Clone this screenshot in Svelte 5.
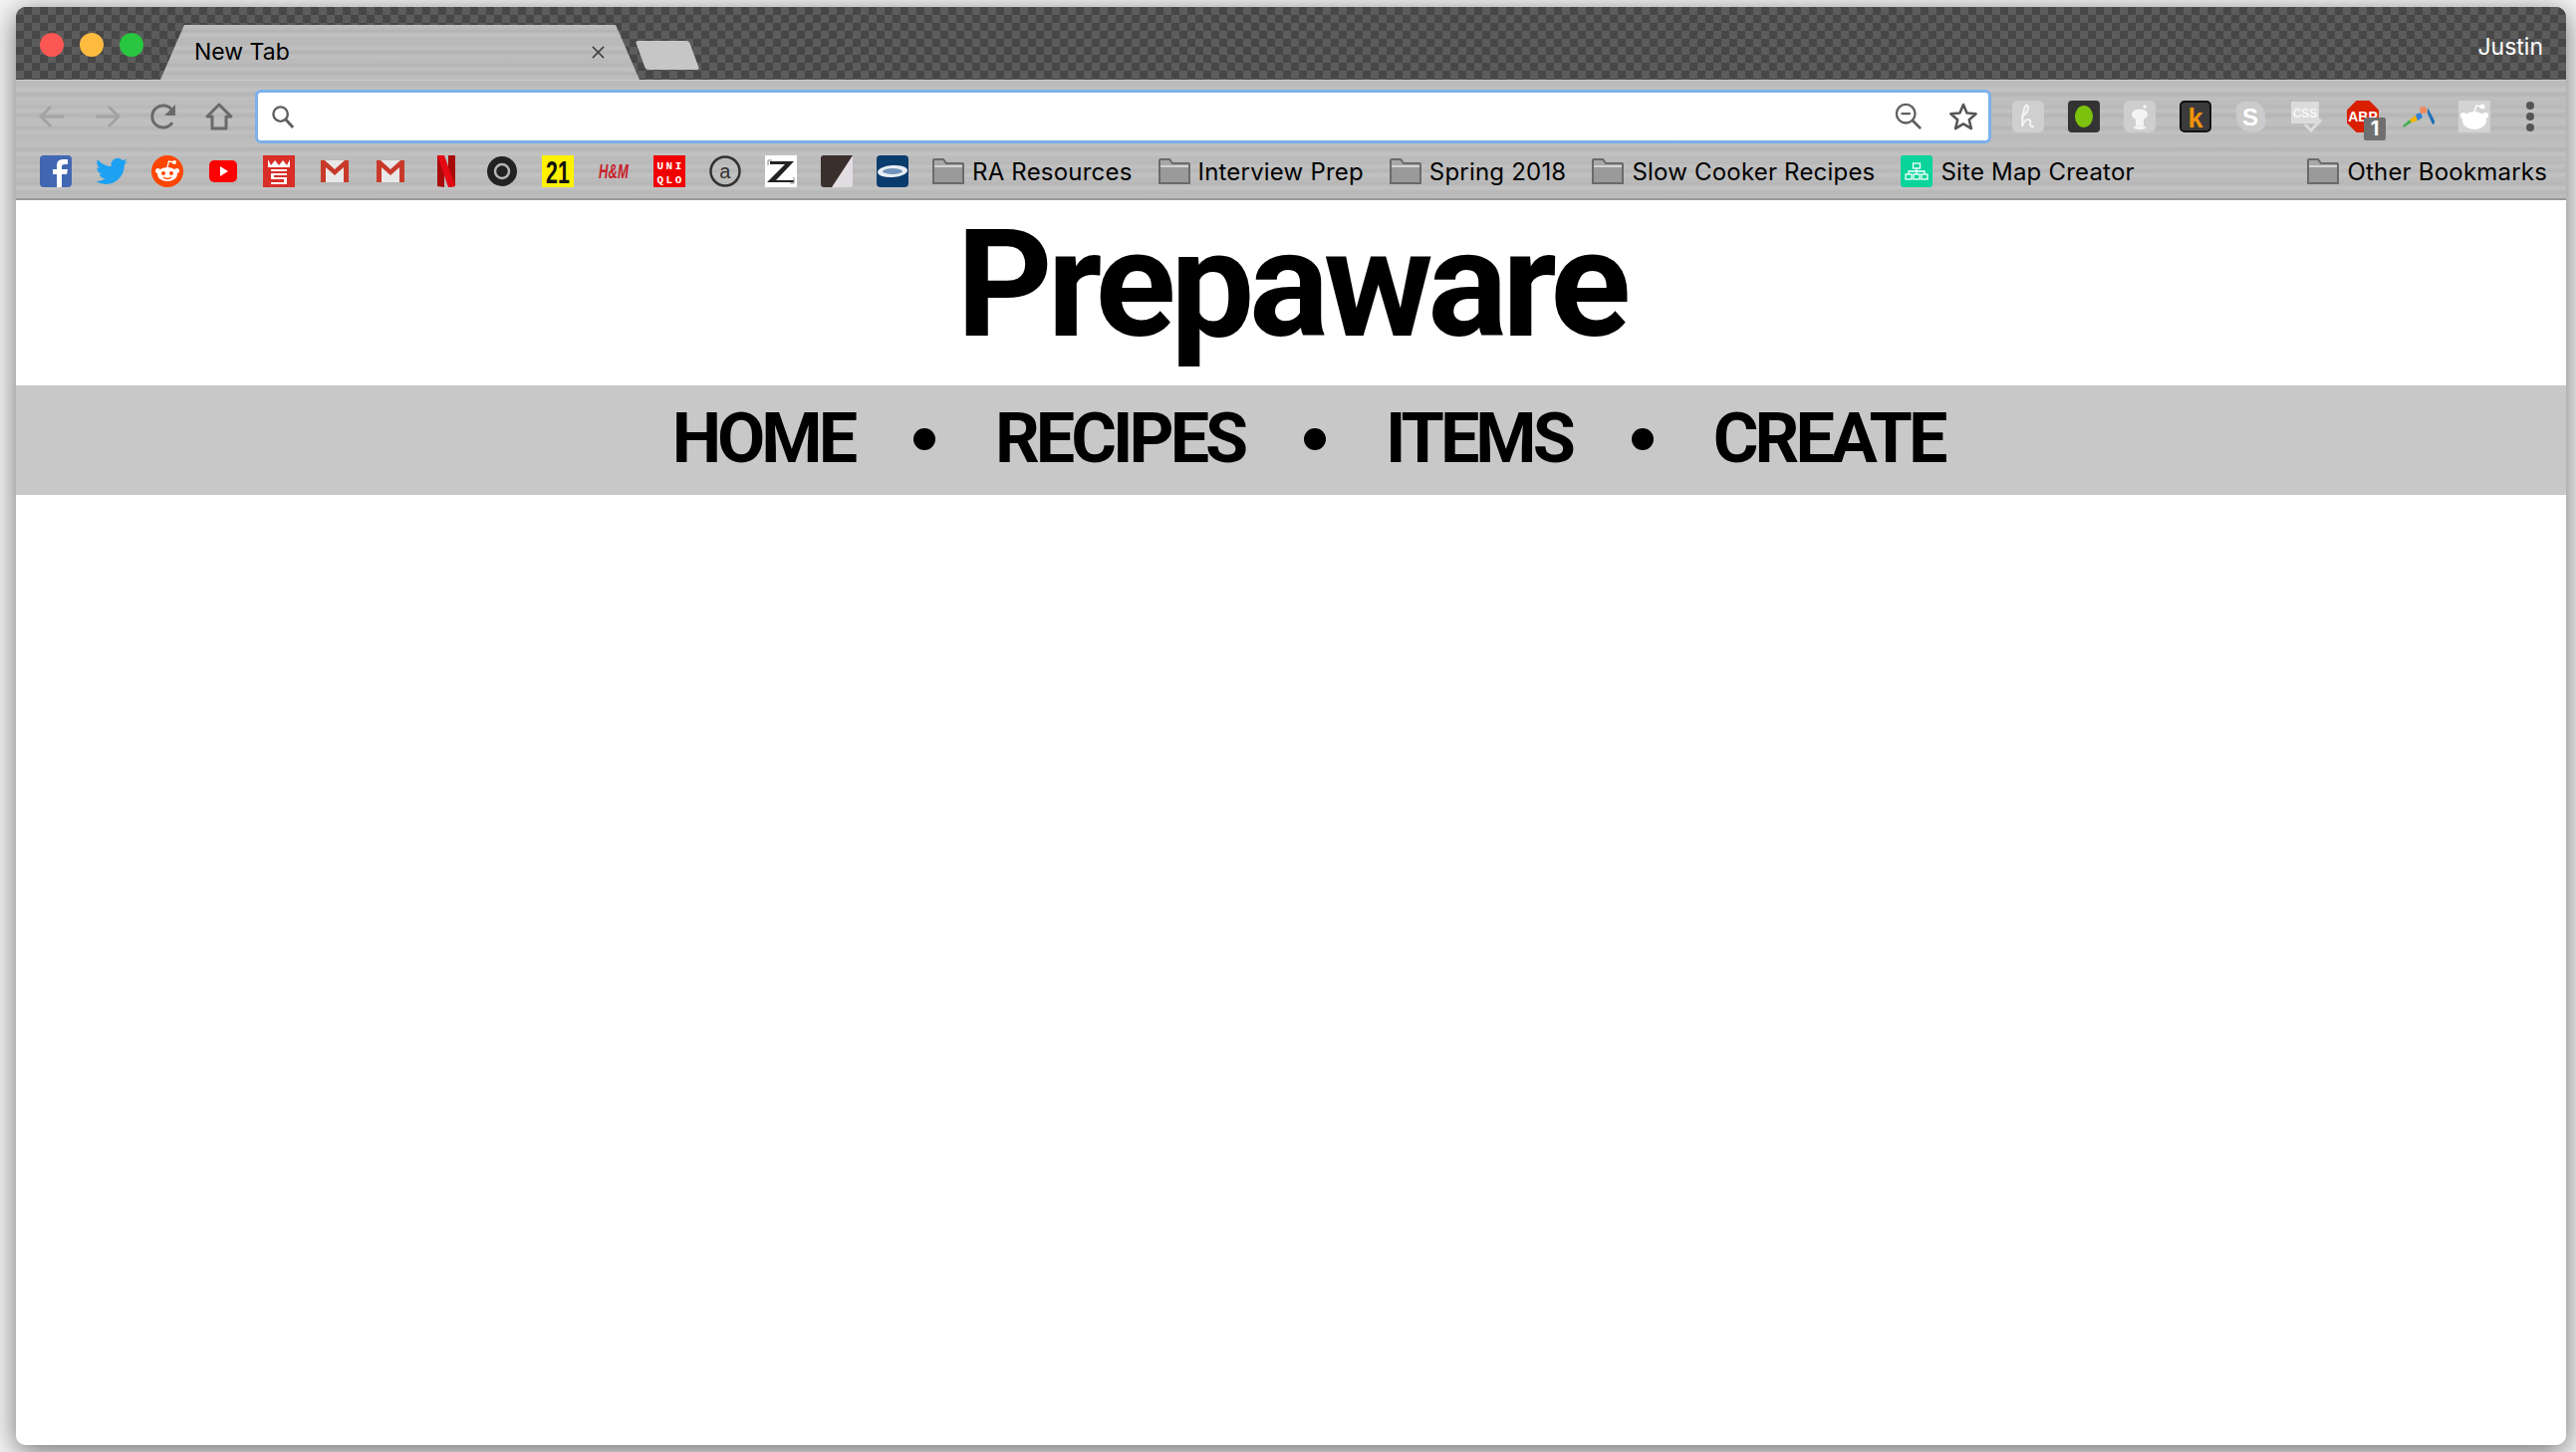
<script>
  const folders = ["RA Resources", "Interview Prep", "Spring 2018", "Slow Cooker Recipes"];
  const links = ["HOME", "RECIPES", "ITEMS", "CREATE"];
</script>

{#snippet folder()}
  <svg class="folder" viewBox="0 0 32 26">
    <path d="M1 25V2q0-1 1-1h9l3 4h16q1 0 1 1v19z" fill="#a8a8a8" stroke="#6a6a6a" stroke-width="2" />
    <path d="M2 7h28v2H2z" fill="#d4d4d4" />
    <path d="M2 9h28v15H2z" fill="#9a9a9a" />
  </svg>
{/snippet}

<div class="page">
  <div class="window">
    <header class="titlebar">
      <div class="lights">
        <span class="light red"></span>
        <span class="light yellow"></span>
        <span class="light green"></span>
      </div>
      <div class="tab">
        <span class="tab-title">New Tab</span>
        <svg class="tab-close" viewBox="0 0 16 16"><path d="M2 2l12 12M14 2L2 14" stroke="#444" stroke-width="1.8" /></svg>
      </div>
      <div class="new-tab"></div>
      <span class="user">Justin</span>
    </header>

    <div class="chrome">
      <div class="toolbar">
        <div class="nav-buttons">
          <svg class="btn" viewBox="0 0 32 32"><path d="M28 16H5M15 6L5 16l10 10" fill="none" stroke="#a3a3a3" stroke-width="3" /></svg>
          <svg class="btn" viewBox="0 0 32 32"><path d="M4 16h23M17 6l10 10-10 10" fill="none" stroke="#a3a3a3" stroke-width="3" /></svg>
          <svg class="btn" viewBox="0 0 32 32"><path d="M25 22a11 11 0 1 1 0-12" fill="none" stroke="#6a6a6a" stroke-width="3" /><path d="M28 4v11H17z" fill="#6a6a6a" /></svg>
          <svg class="btn" viewBox="0 0 32 32"><path d="M16 4L4 16h5v12h14V16h5z" fill="none" stroke="#6a6a6a" stroke-width="3" stroke-linejoin="round" /></svg>
        </div>
        <div class="omnibox">
          <svg class="search" viewBox="0 0 26 26"><circle cx="10" cy="10" r="7.5" fill="none" stroke="#5f5f5f" stroke-width="2.5" /><path d="M15 15l8 9" stroke="#5f5f5f" stroke-width="3" /></svg>
          <div class="omni-right">
            <svg class="zoom-out" viewBox="0 0 30 30"><circle cx="12" cy="12" r="10" fill="none" stroke="#5f5f5f" stroke-width="2.5" /><path d="M7 12h10" stroke="#5f5f5f" stroke-width="2.5" /><path d="M19 19l9 9" stroke="#5f5f5f" stroke-width="3" /></svg>
            <svg class="star" viewBox="0 0 30 30"><path d="M15 3l3.6 8.4 9.1.8-6.900 6 2.100 8.900L15 22.400 7.100 27.100l2.100-8.900-6.900-6 9.100-.8z" fill="none" stroke="#555" stroke-width="2.500" stroke-linejoin="round" /></svg>
          </div>
        </div>
        <div class="extensions">
          <svg class="ext" viewBox="0 0 32 32"><rect width="32" height="32" rx="5" fill="#cfcfcf" /><path d="M9 17q8-6 7-11-2-3-4 2-2 8-2 18 2-7 6-7 3 0 2 4 0 4 4 3" fill="none" stroke="#f4f4f4" stroke-width="2" /></svg>
          <svg class="ext" viewBox="0 0 32 32"><rect width="32" height="32" rx="4" fill="#333" /><ellipse cx="16" cy="16" rx="9" ry="11" fill="#7cc20f" /></svg>
          <svg class="ext" viewBox="0 0 32 32"><rect width="32" height="32" rx="6" fill="#cecece" /><ellipse cx="16" cy="14" rx="8" ry="5.500" fill="#f4f4f4" /><rect x="12" y="19" width="8" height="6" fill="#f4f4f4" /><ellipse cx="16" cy="27" rx="6" ry="2" fill="#f4f4f4" /><circle cx="21" cy="6" r="1.800" fill="#f4f4f4" /></svg>
          <svg class="ext" viewBox="0 0 32 32"><rect x="1" y="1" width="30" height="30" rx="4" fill="#3b3b3b" stroke="#111" stroke-width="2" /><text x="16" y="27" text-anchor="middle" class="t-k">k</text></svg>
          <svg class="ext" viewBox="0 0 32 32"><path d="M8 1q8-1 14 1 8 5 8 14 2 8-2 12t-12 4Q6 31 2 22 0 12 1 6q2-4 7-5z" fill="#cbcbcb" /><text x="15" y="25" text-anchor="middle" class="t-s">S</text></svg>
          <svg class="ext" viewBox="0 0 32 32"><rect y="1" width="28" height="22" rx="1" fill="#dcdcdc" /><text x="14" y="17" text-anchor="middle" class="t-css">CSS</text><path d="M14 24l6 6 10-11" fill="none" stroke="#dcdcdc" stroke-width="3" /></svg>
          <div class="abp">
            <svg class="ext" viewBox="0 0 32 32"><path d="M9.500 0h13L32 9.500v13L22.500 32h-13L0 22.500v-13z" fill="#d91f00" /><text x="16" y="21" text-anchor="middle" class="t-abp">ABP</text></svg>
            <span class="badge">1</span>
          </div>
          <svg class="ext" viewBox="0 0 32 32">
            <path d="M0 25l7-6 2 3-8 5z" fill="#4caf50" />
            <path d="M7 19l6-4 2 5-6 2z" fill="#f4b400" />
            <path d="M13 14l5-2 2 5-5 3z" fill="#2f7fd6" />
            <path d="M17 7l6-1 2 6-7 1z" fill="#f08a5d" />
            <path d="M25 7l8 15-3 2-5-11z" fill="#1e6fb8" />
          </svg>
          <svg class="ext" viewBox="0 0 32 32"><rect width="32" height="32" fill="#d3d3d3" /><ellipse cx="16" cy="20" rx="12" ry="9" fill="#fff" /><circle cx="5" cy="15" r="3" fill="#fff" /><circle cx="27" cy="15" r="3" fill="#fff" /><path d="M16 11l2-6 5 1" fill="none" stroke="#fff" stroke-width="1.500" /><circle cx="24" cy="6" r="2.500" fill="#fff" /></svg>
          <svg class="menu" viewBox="0 0 12 32"><circle cx="6" cy="5" r="4" fill="#555" /><circle cx="6" cy="16" r="4" fill="#555" /><circle cx="6" cy="27" r="4" fill="#555" /></svg>
        </div>
      </div>

      <div class="bookmarks">
        <div class="favs">
          <svg class="fav" viewBox="0 0 32 32"><rect width="32" height="32" rx="4" fill="#4267b2" /><path d="M17 32V19h-4v-5h4v-4q0-6 6-6h5v5h-3q-3 0-3 2v3h6l-1 5h-5v13z" fill="#fff" /></svg>
          <svg class="fav" viewBox="0 0 24 24"><path fill="#1da1f2" d="M23.953 4.570a10 10 0 01-2.825.775 4.958 4.958 0 002.163-2.723c-.951.555-2.005.959-3.127 1.184a4.920 4.920 0 00-8.384 4.482C7.690 8.095 4.067 6.130 1.640 3.162a4.822 4.822 0 00-.666 2.475c0 1.710.870 3.213 2.188 4.096a4.904 4.904 0 01-2.228-.616v.060a4.923 4.923 0 003.946 4.827 4.996 4.996 0 01-2.212.085 4.936 4.936 0 004.604 3.417 9.867 9.867 0 01-6.102 2.105c-.390 0-.779-.023-1.170-.067a13.995 13.995 0 007.557 2.209c9.053 0 13.998-7.496 13.998-13.985 0-.210 0-.420-.015-.630A9.935 9.935 0 0024 4.590z" /></svg>
          <svg class="fav" viewBox="0 0 32 32"><circle cx="16" cy="16" r="16" fill="#ff4500" /><ellipse cx="16" cy="19" rx="10" ry="7" fill="#fff" /><circle cx="6.500" cy="15.500" r="2.500" fill="#fff" /><circle cx="25.500" cy="15.500" r="2.500" fill="#fff" /><path d="M16 12l1.500-6 5 1" fill="none" stroke="#fff" stroke-width="1.300" /><circle cx="23" cy="7" r="2" fill="#fff" /><circle cx="12" cy="18" r="2" fill="#ff4500" /><circle cx="20" cy="18" r="2" fill="#ff4500" /><path d="M12 22q4 3 8 0" fill="none" stroke="#ff4500" stroke-width="1.300" /></svg>
          <svg class="fav" viewBox="0 0 32 32"><rect x="2" y="5" width="28" height="22" rx="5" fill="#f00" /><path d="M13 11l8 5-8 5z" fill="#fff" /></svg>
          <svg class="fav" viewBox="0 0 32 32"><rect width="32" height="32" fill="#d92d27" /><path d="M5 4l3 6 4-5 4 5 4-5 4 5 3-6v8H5zM8 14h16v2H8zM8 18h16v2H11v2h13v7H8v-2h13v-3H8z" fill="#fff" /></svg>
          <svg class="fav" viewBox="0 0 32 32"><rect x="2" y="5" width="28" height="22" fill="#e8e8e8" /><path d="M2 5h4l10 9 10-9h4v22h-5V12l-9 8-9-8v15H2z" fill="#c9392a" /></svg>
          <svg class="fav" viewBox="0 0 32 32"><rect x="2" y="5" width="28" height="22" fill="#e8e8e8" /><path d="M2 5h4l10 9 10-9h4v22h-5V12l-9 8-9-8v15H2z" fill="#c9392a" /></svg>
          <svg class="fav" viewBox="0 0 32 32"><path d="M7 0h7v32l-7-1zM18 0h7v31l-7 1z" fill="#a80a0a" /><path d="M7 0h7l11 31-7 1z" fill="#e50914" /></svg>
          <svg class="fav" viewBox="0 0 32 32"><circle cx="16" cy="16" r="15" fill="#222" /><circle cx="16" cy="16" r="7" fill="none" stroke="#b5b5b5" stroke-width="2.500" /></svg>
          <svg class="fav" viewBox="0 0 32 32"><rect width="32" height="32" fill="#fff200" /><text x="16" y="28" text-anchor="middle" textLength="24" lengthAdjust="spacingAndGlyphs" class="t-21">21</text></svg>
          <svg class="fav" viewBox="0 0 32 32"><text x="16" y="23" text-anchor="middle" textLength="30" lengthAdjust="spacingAndGlyphs" class="t-hm">H&amp;M</text></svg>
          <svg class="fav" viewBox="0 0 32 32"><rect width="32" height="32" fill="#f00000" /><text x="16" y="14" text-anchor="middle" textLength="25" class="t-uq">UNI</text><text x="16" y="28" text-anchor="middle" textLength="25" class="t-uq">QLO</text></svg>
          <svg class="fav" viewBox="0 0 32 32"><circle cx="16" cy="16" r="14.500" fill="none" stroke="#333" stroke-width="2.500" /><text x="16" y="23" text-anchor="middle" class="t-a">a</text></svg>
          <svg class="fav" viewBox="0 0 32 32"><rect width="32" height="32" fill="#fff" /><path d="M5 6h24L11 25h18v2H2l18-18H5z" fill="#222" /><path d="M3 10V5h4M29 22v6h-4" fill="none" stroke="#888" /></svg>
          <svg class="fav" viewBox="0 0 32 32"><rect width="32" height="32" rx="3" fill="#e2dde2" /><path d="M3 0h29L11 32H3q-3 0-3-3V3q0-3 3-3z" fill="#3a2f2d" /></svg>
          <svg class="fav" viewBox="0 0 32 32"><rect width="32" height="32" rx="4" fill="#0b3c6e" /><ellipse cx="16" cy="16" rx="15" ry="6" fill="#e8eef5" transform="rotate(-4 16 16)" /><ellipse cx="16" cy="16" rx="10" ry="3" fill="#6f93ba" /></svg>
        </div>
        {#each folders as name}
          <div class="mark">
            {@render folder()}
            <span>{name}</span>
          </div>
        {/each}
        <div class="mark site-map">
          <svg class="fav" viewBox="0 0 32 32"><rect width="32" height="32" rx="3" fill="#08d49b" /><g fill="none" stroke="#fff" stroke-width="1.300"><rect x="12.500" y="8" width="7" height="5" /><rect x="5" y="19" width="6" height="5" /><rect x="13" y="19" width="6" height="5" /><rect x="21" y="19" width="6" height="5" /><path d="M16 13v6M8 19v-3h16v3" /></g></svg>
          <span>Site Map Creator</span>
        </div>
        <div class="mark other">
          {@render folder()}
          <span>Other Bookmarks</span>
        </div>
      </div>
    </div>

    <main class="content">
      <h1>Prepaware</h1>
      <nav>
        {#each links as link, i}
          {#if i > 0}<span class="dot"></span>{/if}
          <span class="link">{link}</span>
        {/each}
      </nav>
    </main>
  </div>
</div>

<style>
  :global(body) {
    margin: 0;
    overflow: hidden;
    background: #f4f4f4;
  }

  .page {
    box-sizing: border-box;
    height: 100vh;
    padding: 7px 10px 7px 16px;
  }

  .window {
    height: 100%;
    display: flex;
    flex-direction: column;
    border-radius: 10px;
    overflow: hidden;
    box-shadow: 0 6px 28px rgba(0, 0, 0, 0.55);
    font-family: Inter, "Liberation Sans", sans-serif;
  }

  .titlebar {
    height: 73px;
    flex: none;
    display: flex;
    align-items: flex-end;
    padding-left: 24px;
    box-sizing: border-box;
    background-color: #505050;
    background-image: conic-gradient(#474747 25%, #5c5c5c 0 50%, #474747 0 75%, #5c5c5c 0);
    background-size: 16px 16px;
  }

  .lights {
    display: flex;
    gap: 16px;
    align-self: flex-start;
    margin-top: 26px;
  }

  .light {
    width: 24px;
    height: 24px;
    border-radius: 50%;
  }

  .red { background: #fc5753; }
  .yellow { background: #fdbc40; }
  .green { background: #28c73f; }

  .tab {
    width: 481px;
    height: 55px;
    margin-left: 17px;
    box-sizing: border-box;
    padding: 0 34px 0 34px;
    display: flex;
    align-items: center;
    justify-content: space-between;
    clip-path: polygon(0 100%, 24px 0, 457px 0, 100% 100%);
    background-color: #bcbcbc;
    background-image:
      repeating-linear-gradient(0deg, transparent 0, rgba(255, 255, 255, 0.09) 3px, transparent 7px),
      repeating-linear-gradient(0deg, transparent 0, rgba(0, 0, 0, 0.05) 5px, transparent 11px);
  }

  .tab-title {
    font-size: 23px;
    color: #000;
    margin-bottom: 1px;
  }

  .tab-close {
    width: 15px;
    height: 15px;
  }

  .new-tab {
    width: 54px;
    height: 29px;
    margin: 0 0 10px 1px;
    border-radius: 3px;
    transform: skewX(20deg);
    background: #c6c6c6;
  }

  .user {
    margin-left: auto;
    align-self: flex-start;
    margin-top: 27px;
    margin-right: 23px;
    font-size: 23px;
    line-height: 26px;
    color: #fff;
  }

  .chrome {
    flex: none;
    height: 121px;
    border-bottom: 2px solid #999;
    box-sizing: border-box;
    border-top: 1px solid #ccc;
    background-color: #bcbcbc;
    background-image:
      repeating-linear-gradient(0deg, transparent 0, rgba(255, 255, 255, 0.09) 3px, transparent 7px),
      repeating-linear-gradient(0deg, transparent 0, rgba(0, 0, 0, 0.05) 5px, transparent 11px),
      repeating-linear-gradient(0deg, transparent 0, rgba(255, 255, 255, 0.05) 8px, transparent 17px);
  }

  .toolbar {
    height: 72px;
    display: flex;
    align-items: center;
    padding: 0 0 0 20px;
    box-sizing: border-box;
  }

  .nav-buttons {
    display: flex;
    gap: 24px;
  }

  .btn {
    width: 32px;
    height: 32px;
  }

  .omnibox {
    width: 1743px;
    height: 54px;
    margin: 0 0 0 20px;
    box-sizing: border-box;
    border: 3px solid #7cb0ea;
    border-radius: 6px;
    background: #fff;
    display: flex;
    align-items: center;
    padding: 0 10px 0 13px;
  }

  .search {
    width: 25px;
    height: 25px;
  }

  .omni-right {
    margin-left: auto;
    display: flex;
    align-items: center;
    gap: 26px;
  }

  .zoom-out {
    width: 28px;
    height: 28px;
  }

  .star {
    width: 30px;
    height: 30px;
  }

  .extensions {
    display: flex;
    align-items: center;
    gap: 24px;
    margin-left: 21px;
  }

  .ext {
    width: 32px;
    height: 32px;
    display: block;
  }

  .menu {
    width: 12px;
    height: 32px;
    margin-left: 10px;
  }

  .abp {
    position: relative;
  }

  .badge {
    position: absolute;
    left: 17px;
    top: 17px;
    width: 22px;
    height: 23px;
    border-radius: 2px;
    background: #6f6f6f;
    color: #fff;
    font-size: 20px;
    font-weight: bold;
    line-height: 23px;
    text-align: center;
  }

  .t-k { font: bold 27px "Liberation Sans", sans-serif; fill: #f2920c; }
  .t-s { font: bold 24px "Liberation Sans", sans-serif; fill: #fff; }
  .t-css { font: bold 12px "Liberation Sans", sans-serif; fill: #f7f7f7; }
  .t-abp { font: bold 14px "Liberation Sans", sans-serif; fill: #fff; }
  .t-21 { font: bold 32px "Liberation Sans", sans-serif; fill: #111; }
  .t-hm { font: italic bold 20px "Liberation Sans", sans-serif; fill: #c8222a; }
  .t-uq { font: bold 11px "Liberation Mono", monospace; fill: #fff; }
  .t-a { font: 20px "Liberation Sans", sans-serif; fill: #333; }

  .bookmarks {
    height: 38px;
    display: flex;
    align-items: center;
    padding: 0 19px 0 24px;
    font-size: 24px;
    letter-spacing: 0.2px;
    color: #000;
  }

  .favs {
    display: flex;
    gap: 24px;
    margin-right: 24px;
  }

  .fav {
    width: 32px;
    height: 32px;
    flex: none;
    overflow: visible;
  }

  .mark {
    display: flex;
    align-items: center;
    gap: 8px;
    margin-right: 26px;
    white-space: nowrap;
  }

  .folder {
    width: 32px;
    height: 26px;
    flex: none;
  }

  .other {
    margin-left: auto;
    margin-right: 0;
  }

  .content {
    flex: 1;
    background: #fff;
  }

  h1 {
    margin: 0;
    height: 186px;
    font-family: Roboto, "Noto Sans", sans-serif;
    font-size: 150px;
    font-weight: 700;
    line-height: 170px;
    letter-spacing: -5.5px;
    text-align: center;
    color: #000;
  }

  nav {
    height: 110px;
    padding: 0 0 4px 34px;
    box-sizing: border-box;
    display: flex;
    align-items: center;
    justify-content: center;
    gap: 60px;
    background: #c8c8c8;
    font-family: Roboto, "Noto Sans", sans-serif;
    font-size: 70px;
    font-weight: 700;
    letter-spacing: -4px;
    color: #000;
  }

  .dot {
    width: 22px;
    height: 22px;
    margin-top: 2px;
    border-radius: 50%;
    background: #000;
  }
</style>
